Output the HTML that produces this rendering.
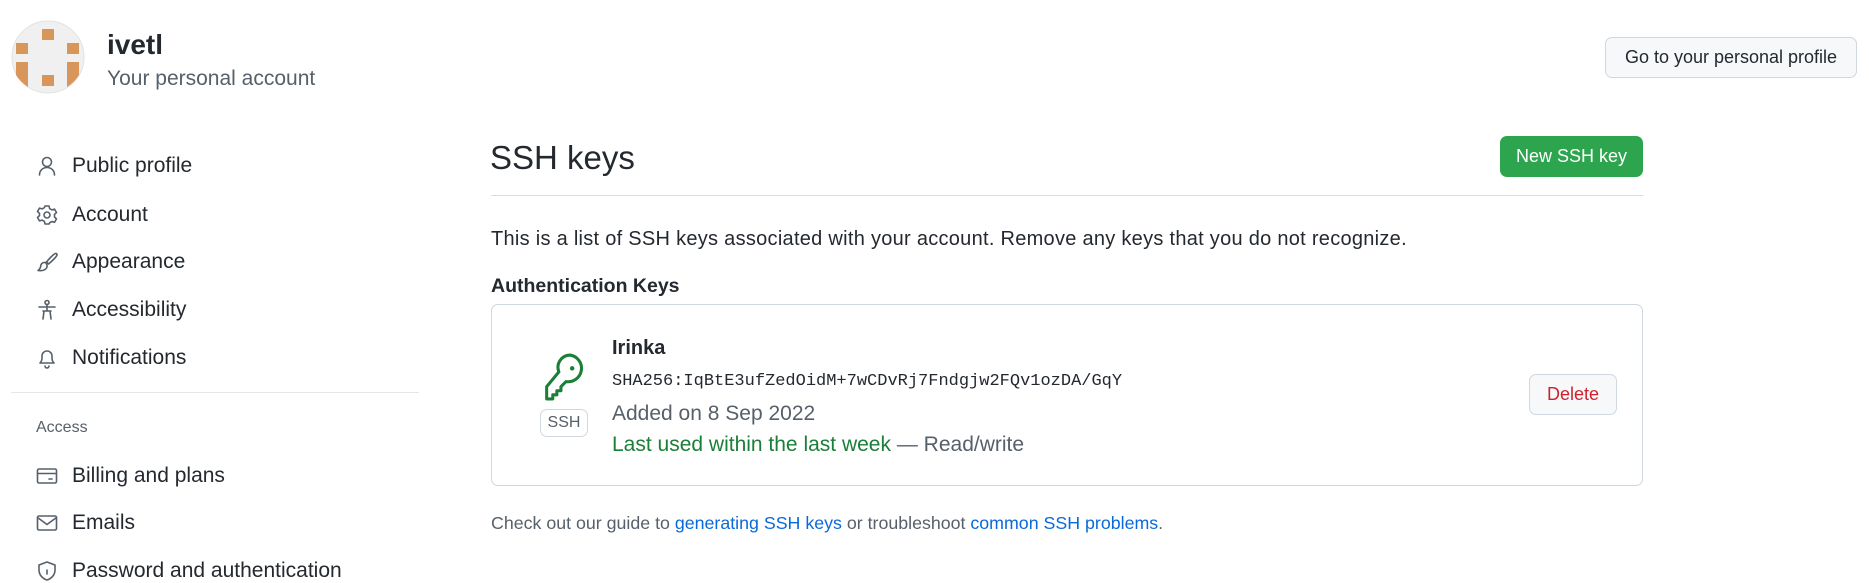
<!DOCTYPE html>
<html><head><meta charset="utf-8"><style>
*{margin:0;padding:0;box-sizing:border-box}
body{width:1869px;height:579px;overflow:hidden;background:#fff;font-family:"Liberation Sans",Arial,sans-serif;color:#24292f;position:relative}
.a{position:absolute;white-space:nowrap}
.nav{position:absolute;left:36px;height:24px;display:flex;align-items:center;font-size:21px;color:#24292f}
.nav svg{width:22px;height:22px;margin-right:14px;fill:none;stroke:#57606a;stroke-width:1.6;stroke-linecap:round;stroke-linejoin:round}
.btn{position:absolute;border:1px solid #d0d7de;border-radius:7px;background:#f6f8fa;display:flex;align-items:center;justify-content:center;font-size:18px}
a{color:#0969da;text-decoration:none}
</style></head><body>
<svg class="a" style="left:10px;top:20px" width="76" height="74" viewBox="0 0 76 74">
<circle cx="38" cy="37" r="36" fill="#f0f0f0" stroke="#e2e2e2"/>
<rect x="32" y="9" width="12" height="11" fill="#d9965b"/>
<rect x="6" y="23" width="12" height="11" fill="#d9965b"/>
<rect x="57" y="23" width="12" height="11" fill="#d9965b"/>
<path d="M6 42h12v25 a36 36 0 0 1 -12 -12z" fill="#d9965b"/>
<path d="M57 42h12v13 a36 36 0 0 1 -12 12z" fill="#d9965b"/>
<rect x="32" y="55" width="12" height="11" fill="#d9965b"/>
</svg>
<div class="a" style="left:107px;top:29px;font-size:28px;font-weight:bold">ivetl</div>
<div class="a" style="left:107px;top:67px;font-size:21px;color:#57606a">Your personal account</div>
<div class="btn" style="left:1605px;top:37px;width:252px;height:41px">Go to your personal profile</div>

<div class="nav" style="top:154px"><svg viewBox="0 0 22 22"><circle cx="11" cy="7" r="4.5"/><path d="M3.5 20c0-4.5 3.3-7.5 7.5-7.5s7.5 3 7.5 7.5"/></svg>Public profile</div>
<div class="nav" style="top:203px"><svg viewBox="0 0 22 22"><circle cx="11" cy="11" r="3"/><path d="M9 2h4l.6 2.6 2.3 1.3 2.6-.8 2 3.4-2 1.9v2.6l2 1.9-2 3.4-2.6-.8-2.3 1.3L13 20H9l-.6-2.6-2.3-1.3-2.6.8-2-3.4 2-1.9V9.4l-2-1.9 2-3.4 2.6.8 2.3-1.3z"/></svg>Account</div>
<div class="nav" style="top:250px"><svg viewBox="0 0 22 22"><path d="M19.5 2.5c-2 .5-7 6-9 8.5l2 2c2.5-2 8-7 8.5-9 .2-1-.5-1.7-1.5-1.5z"/><path d="M9.5 11.5c-2.5-.5-4.5 1-4.8 3.5-.2 2-1.2 3.5-2.7 4.5 3 .5 7 0 8.5-2.5 1-1.700.8-3.5-1-5.5z"/></svg>Appearance</div>
<div class="nav" style="top:298px"><svg viewBox="0 0 22 22"><circle cx="11" cy="3.5" r="2"/><path d="M3 8h16M11 6v6M7 20l1-8h6l1 8M7 12h8"/></svg>Accessibility</div>
<div class="nav" style="top:346px"><svg viewBox="0 0 22 22"><path d="M4 16c1.5-1.5 2-3 2-5V9a5 5 0 0 1 10 0v2c0 2 .5 3.5 2 5z"/><path d="M9 19a2 2 0 0 0 4 0"/></svg>Notifications</div>
<div class="a" style="left:11px;top:392px;width:408px;height:1px;background:#e4e7ea"></div>
<div class="a" style="left:36px;top:419px;font-size:16px;color:#57606a">Access</div>
<div class="nav" style="top:464px"><svg viewBox="0 0 22 22"><rect x="1.5" y="4" width="19" height="14" rx="1.5"/><path d="M1.5 8.5h19M13 14h3"/></svg>Billing and plans</div>
<div class="nav" style="top:511px"><svg viewBox="0 0 22 22"><rect x="1.5" y="4" width="19" height="14" rx="1.5"/><path d="M1.5 5.5l9.5 7 9.5-7"/></svg>Emails</div>
<div class="nav" style="top:559px"><svg viewBox="0 0 22 22"><path d="M11 2l8 3v5c0 5-3.5 8.5-8 10-4.5-1.5-8-5-8-10V5z"/><path d="M11 10v4"/></svg>Password and authentication</div>

<div class="a" style="left:490px;top:139px;font-size:33px">SSH keys</div>
<div class="a" style="left:1500px;top:136px;width:143px;height:41px;border-radius:7px;background:#2da44e;color:#fff;font-size:18px;display:flex;align-items:center;justify-content:center">New SSH key</div>
<div class="a" style="left:491px;top:195px;width:1152px;height:1px;background:#d8dee4"></div>
<div class="a" style="left:491px;top:228px;font-size:20px;letter-spacing:.28px">This is a list of SSH keys associated with your account. Remove any keys that you do not recognize.</div>
<div class="a" style="left:491px;top:275px;font-size:19.5px;font-weight:bold">Authentication Keys</div>
<div class="a" style="left:491px;top:304px;width:1152px;height:182px;border:1px solid #d0d7de;border-radius:7px"></div>
<svg class="a" style="left:539px;top:352px" width="50" height="51" viewBox="0 0 40 50"><path d="M26 3a12 12 0 0 0-11 16.5L3 34v12h6v-4h4v-4h4v-4l5-5A12 12 0 1 0 26 3z" fill="none" stroke="#1a7f37" stroke-width="3" stroke-linejoin="round"/><circle cx="28" cy="16" r="2.2" fill="#1a7f37"/></svg>
<div class="a" style="left:540px;top:409px;width:48px;height:28px;border:1px solid #d0d7de;border-radius:7px;font-size:16px;color:#57606a;display:flex;align-items:center;justify-content:center">SSH</div>
<div class="a" style="left:612px;top:337px;font-size:20px;font-weight:bold">Irinka</div>
<div class="a" style="left:612px;top:372px;font-size:17px;font-family:'Liberation Mono',monospace">SHA256:IqBtE3ufZedOidM+7wCDvRj7Fndgjw2FQv1ozDA/GqY</div>
<div class="a" style="left:612px;top:402px;font-size:21px;color:#57606a">Added on 8 Sep 2022</div>
<div class="a" style="left:612px;top:433px;font-size:21px;color:#57606a"><span style="color:#1a7f37">Last used within the last week</span> — Read/write</div>
<div class="btn" style="left:1529px;top:374px;width:88px;height:41px;color:#cf222e">Delete</div>
<div class="a" style="left:491px;top:513px;font-size:17.8px;color:#57606a">Check out our guide to <a>generating SSH keys</a> or troubleshoot <a>common SSH problems</a>.</div>
</body></html>
